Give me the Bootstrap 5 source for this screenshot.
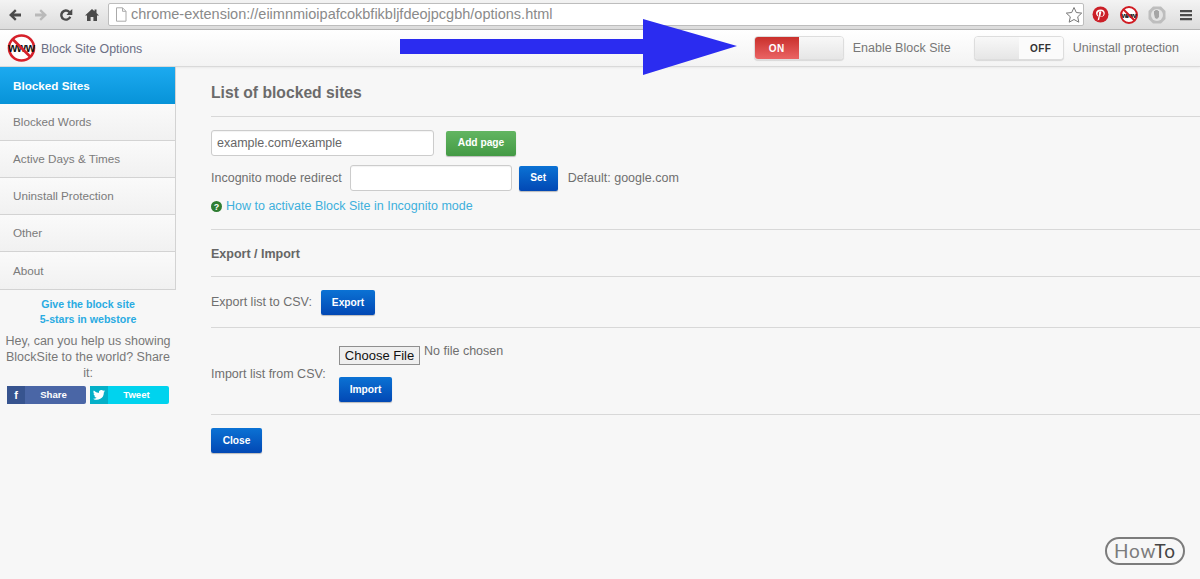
<!DOCTYPE html>
<html lang="en"><head><meta charset="utf-8"><title>Block Site Options</title>
<link href="https://cdn.jsdelivr.net/npm/bootstrap@5.3.0/dist/css/bootstrap.min.css" rel="stylesheet">
<style>
html,body{height:100%;overflow:hidden}
body{background:#f7f7f7;font-family:"Liberation Sans",Arial,sans-serif;font-size:12.5px;color:#6f6f6f;position:relative;width:1200px;height:579px}
.chrome-bar{height:30px;background:linear-gradient(#f3f3f3,#dcdcdc);border-bottom:1px solid #b5b5b5;padding:0 7px}
.tool-ic{width:16px;height:16px;flex:none}
.tool-gap{margin-left:9.5px}
.omni{width:976px;flex:none;height:23px;margin-left:8.5px;background:#fff;border:1px solid #bdbdbd;border-radius:2px;font-size:14.5px;color:#8a8a8a;padding-left:6px;gap:4px}
.ext-row{margin-left:8px}
.app-head{height:37px;background:linear-gradient(#fff,#f3f3f3);border-bottom:1px solid #d9d9d9;box-shadow:0 1px 2px rgba(0,0,0,.06);padding:0 21px 0 7px}
.brand-text{font-size:12.4px;color:#6b6f85;margin-left:4px;margin-top:3px}
.sw{width:90px;height:24px;border:1px solid #ddd;border-radius:4px;overflow:hidden;background:#fff;box-shadow:0 1px 1px rgba(0,0,0,.12);font-size:10px;font-weight:700;letter-spacing:.5px}
.sw>span{width:45px;height:100%}
.sw-red{background:linear-gradient(#c9302c,#ea6464);color:#fff}
.sw-grey{background:linear-gradient(#f8f8f8,#e6e6e6)}
.sw-white{background:#fbfbfb;color:#333}
.sw-label{font-size:12.5px;color:#777;margin:0 23px 0 9px}
.sw-label.last{margin-right:0}
.side{width:176px;flex:none}
.side-nav{border-right:1px solid #d3d3d3;border-bottom:1px solid #d3d3d3}
.side-link{height:37px;padding:0 13px;font-size:11.7px;color:#7b7b7b;background:linear-gradient(#fafafa,#f1f1f1);border-bottom:1px solid #d3d3d3;text-decoration:none}
.side-nav .side-link:last-child{border-bottom:0}
.side-link.on{background:linear-gradient(#1caaf0,#0793d8);color:#fff;font-weight:700;border-bottom:0}
.rate{font-size:10.6px;font-weight:700;color:#29abe2;line-height:15px;margin-top:7px;text-decoration:none}
.share-q{font-size:12.5px;line-height:16px;color:#777;margin-top:6px;padding:0 3px}
.soc-row{margin-top:5px}
.soc{height:18px;width:79px;border-radius:2px;color:#fff;font-size:9.6px;font-weight:700}
.soc i{width:18px;height:100%;font-style:normal;font-size:11px}
.soc b{flex:1;text-align:center;padding-right:4px}
.soc-fb{background:#4a66a6}.soc-fb i{background:#37548f}
.soc-tw{background:#00d3ee}.soc-tw i{background:#04b0c8}
.pane{padding:0 0 0 35px;width:1024px}
.pane-title{font-size:15.7px;font-weight:700;color:#6b6b6b;margin:17px 0 14px;line-height:18px}
.rule{margin:0;border:0;border-top:1px solid #d8d8d8;opacity:1}
.fld{height:26px;border:1px solid #ccc;border-radius:3px;background:#fff;font-size:12.5px;color:#666;padding:0 5px;box-shadow:inset 0 1px 1px rgba(0,0,0,.05)}
.fld::placeholder{color:#666;opacity:1}
.act{height:25px;border:0;border-radius:2px;color:#fff;font-size:10.2px;font-weight:700;padding:0;box-shadow:0 1px 1px rgba(0,0,0,.25)}
.act-blue{background:linear-gradient(#0b72d4,#0248b4)}
.act-green{background:linear-gradient(#62b561,#449a45)}
.fbtn{height:19px;width:81px;background:#efefef;border:1px solid #8f8f8f;font-size:13px;color:#111;padding:0;border-radius:0;line-height:15px}
.help{color:#3eb0dc;font-size:12.5px;text-decoration:none}
.sub-h{font-size:12.5px;font-weight:700;color:#666;line-height:14px;padding:17px 0 15px}
.howto{position:absolute;right:15px;bottom:14px;width:80px;height:28px;border:2px solid #7c7c7c;border-radius:14px;font-family:"Lato",sans-serif;font-size:19px;line-height:24px;text-align:center;color:#7c7c7c;letter-spacing:.8px}
.howto b{color:#444;font-weight:400}
.arrow-over{position:absolute;left:400px;top:19px}
</style></head><body>
<div class="chrome-bar d-flex align-items-center">
 <svg class="tool-ic" viewBox="0 0 16 16"><path d="M14 6.5H7l2.6-2.6L8 2.300 2 8l6 5.700 1.600-1.600L7 9.500h7z" fill="#4a4a4a"/></svg>
 <svg class="tool-ic tool-gap" viewBox="0 0 16 16"><path d="M2 6.500h7L6.400 3.900 8 2.300 14 8l-6 5.700-1.600-1.600L9 9.500H2z" fill="#b9b9b9"/></svg>
 <svg class="tool-ic tool-gap" viewBox="0 0 16 16"><path d="M13.300 10.200A5.800 5.800 0 1 1 12 3.900L14.300 2v6H8.500l1.900-2.200a3.400 3.400 0 1 0 .8 3.500z" fill="#4a4a4a"/></svg>
 <svg class="tool-ic tool-gap" viewBox="0 0 16 16"><path d="M8 2 1 8.500h2V14h3.600v-4h2.800v4H13V8.500h2l-2.500-2.400V2.500h-2v1.700z" fill="#4a4a4a"/></svg>
 <div class="omni d-flex align-items-center">
  <svg width="12" height="15" viewBox="0 0 12 15"><path d="M1.500.8h6l3.500 3.500v9.900h-9.500zM7.500.8v3.500H11" fill="#fff" stroke="#aaa"/></svg>
  <span class="flex-grow-1">chrome-extension://eiimnmioipafcokbfikbljfdeojpcgbh/options.html</span>
  <svg width="18" height="18" viewBox="0 0 18 18"><path d="m9 1.500 2.300 5 5.400.6-4 3.700 1.100 5.400L9 13.500l-4.800 2.700 1.100-5.400-4-3.700 5.400-.6z" fill="#fff" stroke="#777"/></svg>
 </div>
 <div class="d-flex align-items-center ext-row">
  <svg width="17" height="17" viewBox="0 0 17 17"><circle cx="8.500" cy="8.500" r="8" fill="#cb1f27"/><path d="M8.800 3.500c2.500 0 4 1.600 4 3.600 0 2.300-1.500 3.900-3.200 3.900-.8 0-1.400-.4-1.700-.9L7.200 13.800l-1.600.7 1.500-6.700c-.5-1.300.2-2.600 1.200-2.600.8 0 1.100.7.900 1.500l-.7 2.500c-.2.800.4 1.300 1 1.300 1.200 0 2-1.300 2-2.900 0-1.300-1-2.500-2.800-2.500-2 0-3.100 1.400-3.100 2.900 0 .6.200 1 .5 1.300l-.4 1.200C4.500 9.200 4 8.100 4 7c0-1.900 1.500-3.500 4.800-3.500z" fill="#fff"/></svg>
  <svg width="20" height="20" viewBox="0 0 20 20" style="margin-left:10px"><circle cx="10" cy="10" r="8" fill="#fff" stroke="#d01b22" stroke-width="2"/><text x="10" y="13" text-anchor="middle" font-family="Liberation Sans" font-weight="700" font-size="8" fill="#111" textLength="15">www</text><path d="m4.500 4.500 11 11" stroke="#d01b22" stroke-width="2"/></svg>
  <svg width="20" height="20" viewBox="0 0 20 20" style="margin-left:8px"><path d="m6 1.500h8l4.500 4.500v8L14 18.500H6L1.500 14V6z" fill="#bdbdbd"/><circle cx="10" cy="10" r="6" fill="#e3e3e3"/><path d="M7 9V6h1.200v3-4h1.300v4-4h1.300v4-3H12v6l-2 2-2-1z" fill="#a5a5a5"/></svg>
  <svg width="14" height="14" viewBox="0 0 14 14" style="margin-left:12px"><path d="M1 2h12v2.200H1zM1 6h12v2.200H1zM1 10h12v2.200H1z" fill="#4a4a4a"/></svg>
 </div>
</div>
<header class="app-head d-flex align-items-center">
 <svg width="30" height="30" viewBox="0 0 30 30"><circle cx="14.500" cy="15" r="12.500" fill="#fff" stroke="#d6212b" stroke-width="2.600"/><text x="14.500" y="19" text-anchor="middle" font-family="Liberation Sans" font-weight="700" font-size="12" fill="#111" textLength="27">www</text><path d="m5.500 6 18 18" stroke="#d6212b" stroke-width="2.600"/></svg>
 <span class="brand-text">Block Site Options</span>
 <div class="ms-auto d-flex align-items-center">
  <div class="sw d-flex"><span class="sw-red d-flex align-items-center justify-content-center">ON</span><span class="sw-grey"></span></div>
  <span class="sw-label">Enable Block Site</span>
  <div class="sw d-flex"><span class="sw-grey"></span><span class="sw-white d-flex align-items-center justify-content-center">OFF</span></div>
  <span class="sw-label last">Uninstall protection</span>
 </div>
</header>
<div class="d-flex">
 <aside class="side text-center">
  <nav class="side-nav d-flex flex-column text-start">
   <a class="side-link on d-flex align-items-center" href="#">Blocked Sites</a>
   <a class="side-link d-flex align-items-center" href="#">Blocked Words</a>
   <a class="side-link d-flex align-items-center" href="#">Active Days &amp; Times</a>
   <a class="side-link d-flex align-items-center" href="#">Uninstall Protection</a>
   <a class="side-link d-flex align-items-center" href="#">Other</a>
   <a class="side-link d-flex align-items-center" href="#">About</a>
  </nav>
  <a class="rate d-block" href="#">Give the block site<br>5-stars in webstore</a>
  <p class="share-q mb-0">Hey, can you help us showing BlockSite to the world? Share it:</p>
  <div class="soc-row d-flex justify-content-center gap-1">
   <div class="soc soc-fb d-flex align-items-center"><i class="d-flex align-items-center justify-content-center">f</i><b>Share</b></div>
   <div class="soc soc-tw d-flex align-items-center"><i class="d-flex align-items-center justify-content-center"><svg width="12" height="10" viewBox="0 0 24 20"><path d="M24 2.400a9.800 9.800 0 0 1-2.800.8 5 5 0 0 0 2.200-2.700 9.800 9.800 0 0 1-3.100 1.200A4.900 4.900 0 0 0 11.900 6.100 14 14 0 0 1 1.700.9a4.900 4.900 0 0 0 1.500 6.600 4.900 4.900 0 0 1-2.200-.6c0 2.400 1.700 4.400 3.900 4.900a4.900 4.900 0 0 1-2.200.1 4.900 4.900 0 0 0 4.600 3.400A9.900 9.900 0 0 1 0 17.300 14 14 0 0 0 21.600 4.900 10 10 0 0 0 24 2.400z" fill="#fff"/></svg></i><b>Tweet</b></div>
  </div>
 </aside>
 <main class="pane">
  <h1 class="pane-title">List of blocked sites</h1>
  <hr class="rule">
  <div class="d-flex align-items-center" style="margin-top:13px">
   <input class="fld" style="width:223px" placeholder="example.com/example">
   <button class="act act-green" style="width:70px;margin-left:12px">Add page</button>
  </div>
  <div class="d-flex align-items-center" style="margin-top:9px">
   <span>Incognito mode redirect</span>
   <input class="fld" style="width:162px;margin-left:8px">
   <button class="act act-blue" style="width:39px;margin-left:7px">Set</button>
   <span style="margin-left:10px">Default: google.com</span>
  </div>
  <div class="d-flex align-items-center gap-1" style="margin-top:8px;height:15px">
   <svg width="11" height="11" viewBox="0 0 11 11"><circle cx="5.500" cy="5.500" r="5.500" fill="#2f7d32"/><text x="5.500" y="9" text-anchor="middle" font-family="Liberation Sans" font-weight="700" font-size="9" fill="#fff">?</text></svg>
   <a class="help" href="#">How to activate Block Site in Incognito mode</a>
  </div>
  <hr class="rule" style="margin-top:15px">
  <div class="sub-h">Export / Import</div>
  <hr class="rule">
  <div class="d-flex align-items-center" style="padding:13px 0 12px">
   <span style="width:110px">Export list to CSV:</span>
   <button class="act act-blue" style="width:54px">Export</button>
  </div>
  <hr class="rule">
  <div class="d-flex align-items-center" style="padding:18px 0 12px">
   <span style="width:128px">Import list from CSV:</span>
   <div>
    <div class="d-flex align-items-start"><button class="fbtn">Choose File</button><span style="margin-left:4px;line-height:11px">No file chosen</span></div>
    <button class="act act-blue d-block" style="width:53px;margin-top:12px">Import</button>
   </div>
  </div>
  <hr class="rule">
  <button class="act act-blue d-block" style="width:51px;margin-top:13px">Close</button>
 </main>
</div>
<svg class="arrow-over" width="338" height="56" viewBox="0 0 338 56"><path d="M0 20h243V0l94 27-94 29V35H0z" fill="#2b2cf0"/></svg>
<div class="howto">How<b>To</b></div>
<script src="https://cdn.jsdelivr.net/npm/bootstrap@5.3.0/dist/js/bootstrap.bundle.min.js"></script>
</body></html>
